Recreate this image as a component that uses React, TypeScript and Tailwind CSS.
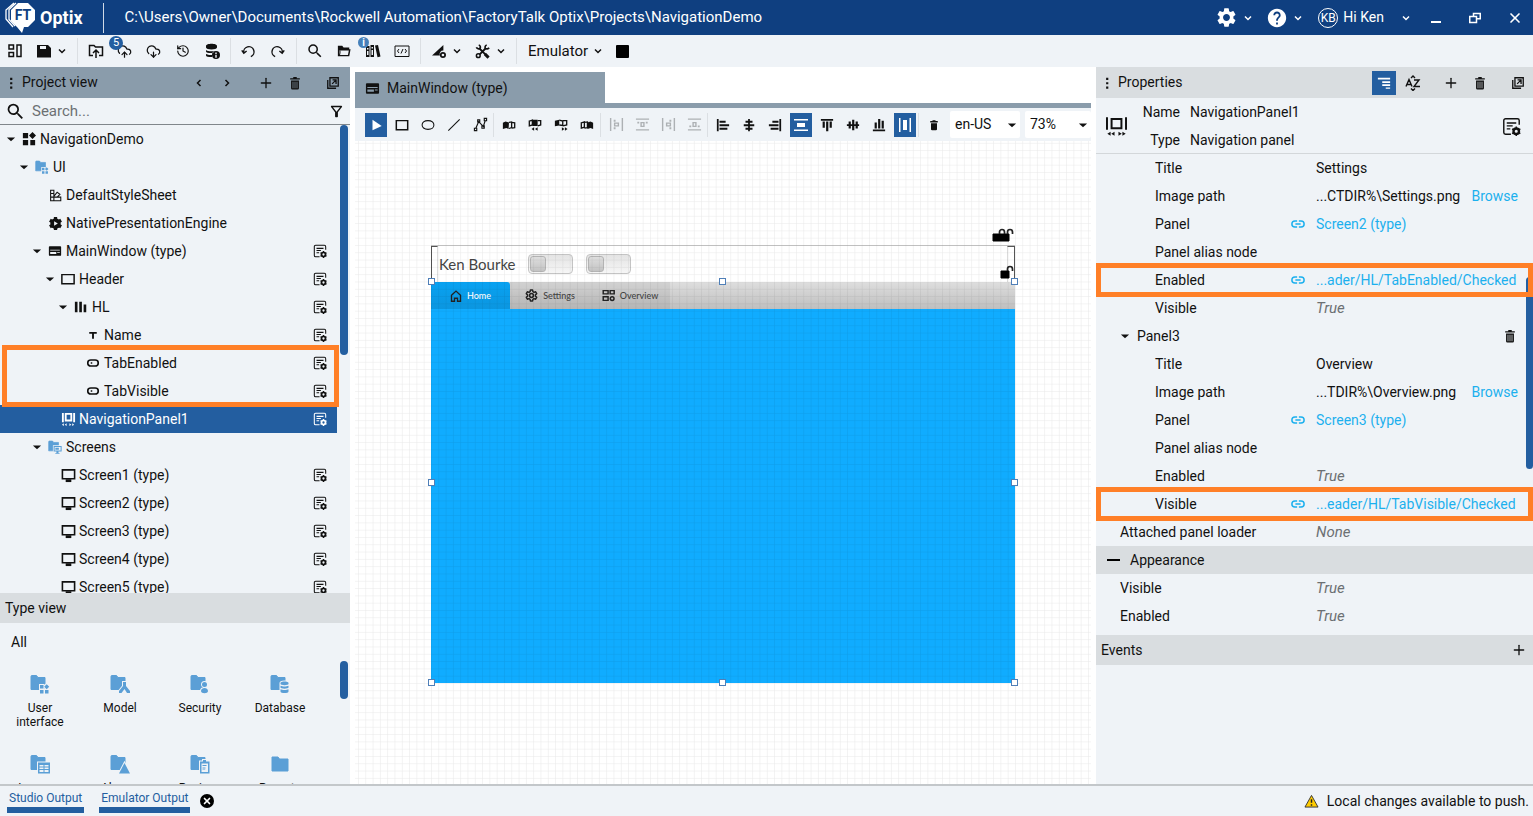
import type { ReactNode } from "react";
import clsx from "clsx";
import { CloudDownload, CloudUpload, History, Plus, X } from "lucide-react";
import { MdHelp, MdOutlineFilterAlt, MdSearch, MdSettings } from "react-icons/md";

interface GlyphProps {
    d?: string;
    line?: string;
    size?: number;
    width?: number;
    className?: string;
}

// d is filled, line is stroked, both on a 16 unit grid
function Glyph({ d, line, size = 16, width = 1.5, className }: GlyphProps) {
    return (
        <svg width={size} height={size} viewBox="0 0 16 16" className={clsx("shrink-0", className)} aria-hidden="true">
            {d && <path d={d} fill="currentColor" fillRule="evenodd" />}
            {line && <path d={line} fill="none" stroke="currentColor" strokeWidth={width} />}
        </svg>
    );
}

const TRASH = "M6 1.5h4v1h3v2H3v-2h3zM4 5.5h8v8a1.5 1.5 0 0 1-1.5 1.500h-5A1.5 1.5 0 0 1 4 13.500z";
const NAV_PANEL = "M1 1h2v10H1zM13 1h2v10h-2zM4 1h8v9H4zM6 3v5h4V3zM1 13.500l2-1.500v3zM4 13.500l2-1.500v3zM12 12l2 1.500-2 1.500zM9 12l2 1.500L9 15z";
const WINDOW = "M2 2.500h12a1 1 0 0 1 1 1v9a1 1 0 0 1-1 1H2a1 1 0 0 1-1-1v-9a1 1 0 0 1 1-1zM2.500 6.500v1h11v-1zM2.500 9v2.500h7V9zM10.500 9v1h3V9z";
const ARROW = "M2.500 6h11L8 11z";
const MONITOR = "M1.500 2h13v9.500h-13z";

function Chevron({ className }: { className?: string }) {
    return <Glyph size={8} line="M2 5l6 6 6-6" width={3} className={className} />;
}

function TrashIcon() {
    return (
        <Glyph
            size={14}
            d="M6 1h4v1.500h3.500v1.500h-11V2.500H6zM3.500 5h9v9a1.500 1.500 0 0 1-1.500 1.500H5A1.500 1.500 0 0 1 3.500 14zM5.300 6.500v7.500h.8V6.500zM7.600 6.500v7.500h.8V6.500zM9.900 6.500v7.500h.8V6.500z"
        />
    );
}

function PopOutIcon() {
    return <Glyph size={14} line="M4.500 2h9.500v9.500H4.500zM2 4.500V14h9.500M7 9l4-4M7.500 4.500h4V9" />;
}

function DotsIcon() {
    return <Glyph size={14} d="M7 2h2.500v2.500H7zM7 7h2.500v2.500H7zM7 12h2.500v2.500H7z" />;
}

function EditIcon({ size = 14 }: { size?: number }) {
    return (
        <svg width={size} height={size} viewBox="0 0 16 16" className="shrink-0" aria-hidden="true">
            <path d="M7.500 14.500H3a1.500 1.500 0 0 1-1.500-1.500V3A1.500 1.500 0 0 1 3 1.500h10A1.500 1.500 0 0 1 14.500 3v3.500M4 5h8M4 7.500h5M4 10h3" fill="none" stroke="currentColor" strokeWidth="1.200" />
            <circle cx="12" cy="12" r="2.300" fill="none" stroke="currentColor" strokeWidth="2" />
            <path d="M12 8v8M8.500 10l7 4M8.500 14l7-4" stroke="currentColor" strokeWidth="1.200" strokeDasharray="1.500 5" />
        </svg>
    );
}

function LinkIcon() {
    return <Glyph size={14} line="M7 4.500H4.500a3.500 3.500 0 0 0 0 7H7M9 4.500h2.500a3.500 3.500 0 0 1 0 7H9M5 8h6" width={1.700} className="text-[#1cb0ee]" />;
}

/* ---------- title bar ---------- */

function Logo() {
    return (
        <div className="flex items-center gap-1">
            <svg width="31" height="32" viewBox="0 0 31 32" aria-label="FT">
                <path d="M13 1h10l7 7v10l-7 7h-4l-2 6-5-6-6-6V8z" fill="#fff" />
                <path d="M9 1L1 8v9l7 8M11 1L4 7.500v10L10 24" fill="none" stroke="#fff" strokeWidth="1.300" />
                <text x="18" y="18" textAnchor="middle" fontSize="14" fontWeight="700" fill="#0f3f80">FT</text>
            </svg>
            <span className="text-[18px] font-bold">Optix</span>
        </div>
    );
}

function TitleBar() {
    return (
        <header className="flex h-[35px] shrink-0 items-center bg-[#0f3f80] pl-[5px] text-white">
            <Logo />
            <div className="ml-5 h-[30px] w-px bg-white/80" />
            <h1 className="ml-[21px] text-[15px]">
                C:\Users\Owner\Documents\Rockwell Automation\FactoryTalk Optix\Projects\NavigationDemo
            </h1>
            <div className="ml-auto flex items-center">
                <button aria-label="Settings" className="flex items-center gap-1.5">
                    <MdSettings size={23} />
                    <Chevron />
                </button>
                <button aria-label="Help" className="ml-3.5 flex items-center gap-1.5">
                    <MdHelp size={22} />
                    <Chevron />
                </button>
                <button className="ml-4 flex items-center">
                    <span className="mr-[5px] flex size-5 items-center justify-center rounded-full border border-white text-[12px]">KB</span>
                    Hi Ken
                    <Chevron className="ml-[18px]" />
                </button>
                <button aria-label="Minimize" className="ml-[21px] flex h-5 w-3 items-end pb-[5px]">
                    <span className="h-0.5 w-[10px] bg-white" />
                </button>
                <button aria-label="Restore" className="ml-[26px]">
                    <Glyph size={12} line="M6 6V2h9v7h-4M1 6h9v8H1z" width={2} />
                </button>
                <button aria-label="Close" className="mr-2.5 ml-[26px]">
                    <X size={16} strokeWidth={2.5} />
                </button>
            </div>
        </header>
    );
}

/* ---------- main toolbar ---------- */

function ToolButton({ label, badge, children }: { label: string; badge?: string; children: ReactNode }) {
    return (
        <button aria-label={label} className="relative flex h-7 w-[29px] shrink-0 items-center justify-center">
            {children}
            {badge && (
                <span className={clsx(
                    "absolute flex items-center justify-center rounded-full text-white",
                    badge === "i" ? "top-0 left-0 size-[11px] bg-[#4580ba] text-[10px] font-bold" : "-top-px -left-px size-[14px] bg-[#235ea0] text-[11px]"
                )}>
                    {badge}
                </span>
            )}
        </button>
    );
}

function MenuButton({ label, children }: { label: string; children: ReactNode }) {
    return (
        <button aria-label={label} className="flex h-7 shrink-0 items-center pr-[7px]">
            <span className="flex w-[29px] justify-center">{children}</span>
            <Chevron />
        </button>
    );
}

function Separator() {
    return <div className="mr-[3px] ml-1 h-[26px] w-px shrink-0 bg-[#dbdfe3]" />;
}

function Toolbar() {
    return (
        <div className="flex h-8 shrink-0 items-center bg-[#eff3f7]">
            <ToolButton label="Dashboard"><Glyph line="M2 2h4.500v4H2zM2 9.500h4.500v4H2zM10 2h4v11.500h-4z" /></ToolButton>
            <MenuButton label="Save">
                <Glyph d="M1 2h11l3 3v9.500H1zM4 3v3h6V3z" />
            </MenuButton>
            <Separator />
            <ToolButton label="Open folder"><Glyph line="M5 12.500H1.500v-10H6L7.500 4h7v8.500H11M8 15V7.500M5 10l3-3 3 3" /></ToolButton>
            <ToolButton label="Push" badge="5"><CloudUpload size={15} /></ToolButton>
            <ToolButton label="Pull"><CloudDownload size={15} /></ToolButton>
            <ToolButton label="History"><History size={14} /></ToolButton>
            <ToolButton label="Database information">
                <Glyph d="M2 3c0-3 11-3 11 0v1.500c0 2.500-11 2.500-11 0zM2 7c2 1.500 5 1.500 8 1.200L9 10c-3 .3-7 0-7-1.500zM2 11c2 1 4 1 6 1v2c-4 0-6-.5-6-1.500zM12 8a4 4 0 1 1 0 8 4 4 0 0 1 0-8zM11.300 9.500V11h1.400V9.500zM11.300 11.800v3h1.400v-3z" />
            </ToolButton>
            <Separator />
            <ToolButton label="Undo"><Glyph size={15} line="M3 9.500A5.500 5.500 0 1 1 10.500 13.500M.8 6.800L3 9.800l3-2.300" /></ToolButton>
            <ToolButton label="Redo"><Glyph size={15} line="M13 9.500A5.500 5.500 0 1 0 5.500 13.500M15.200 6.800L13 9.800l-3-2.300" /></ToolButton>
            <Separator />
            <ToolButton label="Search"><MdSearch size={18} /></ToolButton>
            <ToolButton label="Open"><Glyph size={14} d="M1 2h5l1.500 2H14v2h1.500L14 14H1zM3 7v5.500l1-5.500zM4.500 7.500l-1 5h9l1-5z" /></ToolButton>
            <ToolButton label="Libraries" badge="i">
                <Glyph d="M1 3h3.500v11H1zM5.500 2H9v12H5.500zM10 2.500l3-.5 2.500 11.500-3 .8zM2 5v1.500h1.500V5zM2 8v4h1.500V8zM6.500 4v1.500H8V4zM6.500 7v5H8V7z" />
            </ToolButton>
            <ToolButton label="Code"><Glyph line="M1 3h14v10.500H1zM5 6L3.500 8 5 10M11 6l1.500 2-1.500 2M9 6l-2 4.500" width={1} /></ToolButton>
            <Separator />
            <MenuButton label="Measure"><Glyph size={14} d="M0 13L13 1v6.500a4 4 0 0 0-4 5.500zM12.500 9a3.500 3.500 0 1 1 0 7 3.500 3.500 0 0 1 0-7zM12.500 11a1.500 1.500 0 1 0 0 3 1.500 1.500 0 0 0 0-3z" /></MenuButton>
            <MenuButton label="Tools">
                <svg width="15" height="15" viewBox="0 0 16 16" fill="none" stroke="currentColor" aria-hidden="true">
                    <path d="M4.500 4.500L11 11M11.500 4.500L5 11" strokeWidth="2" />
                    <path d="M1.500 3.500a2.500 2.500 0 0 0 4 1 2.500 2.500 0 0 0-1.500-3.500M12.500 1a2.500 2.500 0 0 0-1.500 3.500 2.500 2.500 0 0 0 4-.5" strokeWidth="1.800" />
                    <circle cx="3.500" cy="12.500" r="2" strokeWidth="1.600" />
                    <path d="M10.500 10.500l4 4" strokeWidth="3.200" />
                </svg>
            </MenuButton>
            <Separator />
            <button className="ml-2 flex items-center gap-1.5 text-[15px]">
                Emulator
                <Chevron />
            </button>
            <ToolButton label="Stop"><span className="ml-3 size-[13px] shrink-0 rounded-[1px] bg-black" /></ToolButton>
        </div>
    );
}

/* ---------- project tree ---------- */

interface TreeItem {
    name: string;
    level: number;
    icon: ReactNode;
    open?: boolean;
    editable?: boolean;
    selected?: boolean;
    highlight?: boolean;
}

const indents = ["pl-[5px]", "pl-[18px]", "pl-[31px]", "pl-[44px]", "pl-[57px]", "pl-[69px]"];

const screenIcon = <Glyph size={15} line={MONITOR} d="M5 12h6v3H5z" width={1.700} />;
const toggleIcon = <Glyph size={12} line="M5 4h6a4 4 0 0 1 0 8H5a4 4 0 0 1 0-8zM5 8h2" width={2.2} />;

const tree: TreeItem[] = [
    { name: "NavigationDemo", level: 0, open: true, icon: <Glyph size={14} d="M1 1h6v6H1zM12 0l4 4-4 4-4-4zM1 9h6v6H1zM9.500 9H15v6H9.500z" /> },
    { name: "UI", level: 1, open: true, icon: <FolderIcon kind="grid" size={14} /> },
    { name: "DefaultStyleSheet", level: 2, icon: <Glyph size={13} line="M2 1.500h4v13H2zM2 5.500h4M2 10h12.500v4.500H2M6 9l4-5 3.500 2.500L10 10" width={1.300} /> },
    { name: "NativePresentationEngine", level: 2, icon: <EngineIcon /> },
    { name: "MainWindow (type)", level: 2, open: true, editable: true, icon: <Glyph size={14} d={WINDOW} /> },
    { name: "Header", level: 3, open: true, editable: true, icon: <Glyph size={14} line="M1 3h14v10.500H1z" width={1.700} /> },
    { name: "HL", level: 4, open: true, editable: true, icon: <Glyph size={14} d="M1 2h3v12H1zM6 2h3v12H6zM11 5h3v9h-3z" /> },
    { name: "Name", level: 5, editable: true, icon: <Glyph size={10} d="M2 3h12v3H9.500v8h-3V6H2z" /> },
    { name: "TabEnabled", level: 5, editable: true, highlight: true, icon: toggleIcon },
    { name: "TabVisible", level: 5, editable: true, icon: toggleIcon },
    { name: "NavigationPanel1", level: 3, editable: true, selected: true, icon: <Glyph size={15} d={NAV_PANEL} /> },
    { name: "Screens", level: 2, open: true, icon: <FolderIcon kind="screen" size={14} /> },
    { name: "Screen1 (type)", level: 3, editable: true, icon: screenIcon },
    { name: "Screen2 (type)", level: 3, editable: true, icon: screenIcon },
    { name: "Screen3 (type)", level: 3, editable: true, icon: screenIcon },
    { name: "Screen4 (type)", level: 3, editable: true, icon: screenIcon },
    { name: "Screen5 (type)", level: 3, editable: true, icon: screenIcon },
];

function EngineIcon() {
    return (
        <svg width="15" height="15" viewBox="0 0 16 16" aria-hidden="true">
            <circle cx="8" cy="8" r="5.500" fill="currentColor" />
            <path d="M8 1v14M2 4.500l12 7M2 11.500l12-7" stroke="currentColor" strokeWidth="3.500" />
            <path d="M6.500 5.500v5l4-2.500z" fill="#eff3f7" />
        </svg>
    );
}

type FolderKind = "grid" | "model" | "person" | "database" | "table" | "alarm" | "recipe" | "screen" | "plain";

const folderMarks: Record<FolderKind, string> = {
    grid: "M10 11h3.500v3.500H10zM16.700 10.200l2.500 2.500-2.500 2.500-2.500-2.500zM10 16h3.500v3.500H10zM15 16h3.500v3.500H15z",
    model: "M13 8h3v4l4 5v2h-3l-2.500-4-3 4H9v-2l4-5z",
    person: "M14.500 8a2.500 2.500 0 1 1 0 5 2.500 2.500 0 0 1 0-5zM11 17c0-4 7-4 7 0 0 3-7 3-7 0z",
    database: "M10.500 9c0-2 8-2 8 0v1c0 1.500-8 1.500-8 0zM10.500 11.800c2 1 6 1 8 0v1.700c0 1.500-8 1.500-8 0zM10.500 15.200c2 1 6 1 8 0v2.300c0 2-8 2-8 0z",
    table: "M8 8.500h12v11H8zM9.500 11v1.500h4V11zM14.500 11v1.500h4V11zM9.500 13.500V15h4v-1.500zM14.500 13.500V15h4v-1.500zM9.500 16v2h4v-2zM14.500 16v2h4v-2z",
    alarm: "M14.500 9l5.500 10.500H9z",
    recipe: "M10 7.500h3V6h3v1.500h3.500v12H10zM11.500 9.500V18H18V9.500zM12.500 11h4v1h-4zM12.500 13.500h3v1h-3z",
    screen: "M8 8.500h11.500v8H15v2h1.500v1h-6v-1H12v-2H8zM9.500 10v5H18v-5z",
    plain: "",
};

function FolderIcon({ kind, size = 20 }: { kind: FolderKind; size?: number }) {
    return (
        <svg width={size} height={size} viewBox="0 0 20 20" className="shrink-0 text-[#5b9fd6]" aria-hidden="true">
            <path d={kind === "plain" ? "M2 3h6l1.500 2H18v12H2z" : "M1 2.500A1 1 0 0 1 2 1.500h4.500l1.500 2h7v12H1z"} fill="currentColor" stroke="currentColor" strokeLinejoin="round" />
            <path d={folderMarks[kind]} fill="currentColor" fillRule="evenodd" stroke="#eff3f7" strokeWidth="2" paintOrder="stroke" />
        </svg>
    );
}

function TreeRow({ item }: { item: TreeItem }) {
    return (
        <li className={clsx(
            "relative flex h-7 shrink-0 items-center pr-2.5",
            indents[item.level],
            item.selected && "bg-[#235ea0] text-white"
        )}>
            <span className="w-3">{item.open && <Glyph size={12} d={ARROW} />}</span>
            <span className="mr-[3px] ml-1 flex w-4 justify-center">{item.icon}</span>
            <span className="grow">{item.name}</span>
            {item.editable && <button aria-label={`Edit ${item.name}`}><EditIcon /></button>}
            {item.highlight && (
                <span className="pointer-events-none absolute -top-[4px] -right-[2px] left-[2px] z-10 h-[62px] border-5 border-[#ff7f27]" />
            )}
        </li>
    );
}

function ProjectView() {
    return (
        <section className="flex h-[526px] shrink-0 flex-col">
            <div className="flex h-[31px] shrink-0 items-center bg-[#8a9cab] pr-2.5 pl-1">
                <DotsIcon />
                <h2 className="ml-1">Project view</h2>
                <div className="ml-auto flex items-center">
                    <button aria-label="Back" className="mr-5"><Glyph size={8} line="M11 2L5 8l6 6" width={3} /></button>
                    <button aria-label="Forward" className="mr-[27px]"><Glyph size={8} line="M5 2l6 6-6 6" width={3} /></button>
                    <button aria-label="Add" className="mr-[14px]"><Plus size={16} strokeWidth={2} /></button>
                    <button aria-label="Delete" className="mr-6"><TrashIcon /></button>
                    <button aria-label="Detach"><PopOutIcon /></button>
                </div>
            </div>
            <div className="flex h-[27px] shrink-0 items-center border-b border-[#80868b] pr-[5px] pl-[5px]">
                <MdSearch size={21} />
                <input aria-label="Search" placeholder="Search..." className="ml-1.5 grow bg-transparent text-[15px] outline-none placeholder:text-[#6c7073]" />
                <button aria-label="Filter"><MdOutlineFilterAlt size={17} /></button>
            </div>
            <div className="flex grow overflow-hidden">
                <ul className="flex grow flex-col">
                    {tree.map((item) => <TreeRow key={item.name} item={item} />)}
                </ul>
                <div className="mr-[2px] ml-[3px] h-[230px] w-2 rounded-full bg-[#235ea0]" />
            </div>
        </section>
    );
}

const types: { name: string; kind: FolderKind }[] = [
    { name: "User interface", kind: "grid" },
    { name: "Model", kind: "model" },
    { name: "Security", kind: "person" },
    { name: "Database", kind: "database" },
    { name: "Loggers", kind: "table" },
    { name: "Alarms", kind: "alarm" },
    { name: "Recipes", kind: "recipe" },
    { name: "Reports", kind: "plain" },
];

function TypeView() {
    return (
        <section className="flex min-h-0 grow flex-col">
            <h2 className="flex h-[30px] shrink-0 items-center bg-[#d9dde0] pl-[5px]">Type view</h2>
            <h3 className="flex h-[38px] shrink-0 items-center pl-[11px]">All</h3>
            <div className="flex min-h-0 grow overflow-hidden">
                <div className="grid w-80 auto-rows-[80px] grid-cols-4 pt-[13px]">
                    {types.map((type) => (
                        <button key={type.name} className="flex flex-col items-center gap-[7px] px-3 text-[12px] leading-[14px]">
                            <FolderIcon kind={type.kind} />
                            {type.name}
                        </button>
                    ))}
                </div>
                <div className="mr-[2px] ml-auto h-[38px] w-2 rounded-full bg-[#235ea0]" />
            </div>
        </section>
    );
}

/* ---------- editor ---------- */

interface Tool {
    label: string;
    icon: ReactNode;
    active?: boolean;
    disabled?: boolean;
}

const shapeTools: Tool[] = [
    { label: "Select", active: true, icon: <Glyph size={14} d="M4 2L14.500 9 4 14z" /> },
    { label: "Rectangle", icon: <Glyph size={14} line="M1.500 3h13v10.500h-13z" width={1.700} /> },
    { label: "Ellipse", icon: <Glyph size={14} line="M8 3c9 0 9 10 0 10S-1 3 8 3z" width={1.200} /> },
    { label: "Line", icon: <Glyph size={14} line="M1.500 14.500l13-13" width={1.200} /> },
    { label: "Polyline", icon: <Glyph size={15} line="M3 12l3-7 5 5 2-6M1.500 12H4v2.500H1.500zM5 3h2.200v2.200H5zM9.500 9.500h2.500V12H9.500zM12 1.500h2.500V4H12z" width={1.200} /> },
];

const orderTools: Tool[] = [
    { label: "Bring to front", icon: <Glyph size={14} d="M1 5.500L4 4l4 1-.5 7.500L5 11.500 1 12.500z" line="M8 5l3-.500V11l-3 1M11 5l3.500.500v5.500L11 11.500" /> },
    { label: "Bring forward", icon: <Glyph size={14} d="M5 2h6v7H5zM4 12.500l3-2v4zM8 12.500l3-2v4z" line="M1.500 3.500L5 2.500V8l-3.500 1zM11 3h3.500v5L11 9" /> },
    { label: "Send backward", icon: <Glyph size={14} d="M1 3l5-1v6.500l-5 1zM9 10.500l3 2-3 2zM12.500 10.500l3 2-3 2z" line="M6 2.500l4 1v5l-4-.500M10 3h4.500v5L10 9" /> },
    { label: "Send to back", icon: <Glyph size={14} d="M8.500 5L12 4l3 1.500v7l-3-1-3.500 1z" line="M1.500 5.500L5 4.500v6l-3.500 1zM5 5l3.500-.500V11L5 11.500" /> },
];

const distributeTools: Tool[] = [
    { label: "Distribute left", disabled: true, icon: <Glyph size={15} d="M1 1h1.500v14H1zM13.500 1H15v14h-1.500zM5 3h2v2H5zM5 11h2v2H5z" line="M6 6.500h4v3H6z" /> },
    { label: "Distribute top", disabled: true, icon: <Glyph size={15} d="M1 1.500h14V3H1zM1 13h14v1.500H1zM2.500 5h2v2h-2zM11.500 5h2v2h-2z" line="M6.500 6h3v4h-3z" /> },
    { label: "Distribute right", disabled: true, icon: <Glyph size={15} d="M1 1h1.500v14H1zM13.500 1H15v14h-1.500zM9 3h2v2H9zM9 11h2v2H9z" line="M6 6.500h4v3H6z" /> },
    { label: "Distribute bottom", disabled: true, icon: <Glyph size={15} d="M1 1.500h14V3H1zM1 13h14v1.500H1zM2.500 9h2v2h-2zM11.500 9h2v2h-2z" line="M6.500 6h3v4h-3z" /> },
];

const horizontalTools: Tool[] = [
    { label: "Align left", icon: <Glyph size={14} d="M1 1h2v14H1zM4 3h7v2.500H4zM4 7h11v2.500H4zM4 11h9v2.500H4z" /> },
    { label: "Align center", icon: <Glyph size={14} d="M7 1h2v2h3v2.500H9V7h5v2.500H9V11h3v2.500H9V15H7v-1.500H4V11h3V9.500H2V7h5V5.500H4V3h3z" /> },
    { label: "Align right", icon: <Glyph size={14} d="M13 1h2v14h-2zM5 3h7v2.500H5zM1 7h11v2.500H1zM3 11h9v2.500H3z" /> },
    { label: "Stretch horizontally", active: true, icon: <Glyph size={16} d="M1 2h14v1.500H1zM4 6h8v4H4zM1 12.500h14V14H1z" /> },
];

const verticalTools: Tool[] = [
    { label: "Align top", icon: <Glyph size={14} d="M1 1h14v2H1zM3 4h2.500v7H3zM7 4h2.500v11H7zM11 4h2.500v7H11z" /> },
    { label: "Align middle", icon: <Glyph size={14} d="M1 7v2h2v3h2.500V9H7v5h2.500V9H11v3h2.500V9H15V7h-1.500V4H11v3H9.500V2H7v5H5.500V4H3v3z" /> },
    { label: "Align bottom", icon: <Glyph size={14} d="M1 13h14v2H1zM3 5h2.500v7H3zM7 1h2.500v11H7zM11 3h2.500v9H11z" /> },
    { label: "Stretch vertically", active: true, icon: <Glyph size={16} d="M2 1h1.500v14H2zM6 3h4v10H6zM12.500 1H14v14h-1.500z" /> },
];

function ToolGroup({ tools }: { tools: Tool[] }) {
    return (
        <div className="flex shrink-0 gap-1">
            {tools.map((tool) => (
                <button
                    key={tool.label}
                    aria-label={tool.label}
                    disabled={tool.disabled}
                    className={clsx(
                        "flex h-6 w-[22px] items-center justify-center",
                        tool.active && "bg-[#235ea0] text-white",
                        tool.disabled && "text-[#adb1b4]"
                    )}
                >
                    {tool.icon}
                </button>
            ))}
        </div>
    );
}

function Divider() {
    return <div className="mr-[4px] ml-[2px] h-6 w-px shrink-0 bg-[#dbdfe3]" />;
}

function Picker({ label, value, className }: { label: string; value: string; className?: string }) {
    return (
        <div className={clsx("relative h-[27px] rounded-[2px] bg-white", className)}>
            <select aria-label={label} className="h-full w-full appearance-none pl-[5px] outline-none">
                <option>{value}</option>
            </select>
            <Glyph size={12} d={ARROW} className="pointer-events-none absolute top-2 right-0.5" />
        </div>
    );
}

function EditorToolbar() {
    return (
        <div className="flex h-[33px] shrink-0 items-center overflow-hidden bg-[#eff3f7] pl-2.5">
            <ToolGroup tools={shapeTools} />
            <Divider />
            <ToolGroup tools={orderTools} />
            <Divider />
            <ToolGroup tools={distributeTools} />
            <Divider />
            <ToolGroup tools={horizontalTools} />
            <div className="w-1 shrink-0" />
            <ToolGroup tools={verticalTools} />
            <Divider />
            <ToolGroup tools={[{ label: "Delete", icon: <Glyph size={12} d={TRASH} /> }]} />
            <Picker label="Language" value="en-US" className="ml-[5px] w-[70px] shrink-0" />
            <Picker label="Zoom" value="73%" className="ml-[5px] w-[65px] grow" />
        </div>
    );
}

function Switch({ label }: { label: string }) {
    return (
        <label className="relative flex h-5 w-[45px] rounded-[4px] border border-[#c4c4c4] bg-linear-to-b from-[#e4e4e4] to-[#f6f6f6] p-px">
            <input type="checkbox" aria-label={label} className="absolute inset-0 appearance-none" />
            <span className="h-4 w-[16px] rounded-[3px] border border-[#b4b4b4] bg-linear-to-b from-[#dedede] to-[#c4c4c4]" />
        </label>
    );
}

function Padlock({ pair }: { pair?: boolean }) {
    return (
        <svg width={pair ? 22 : 14} height="14" viewBox={pair ? "0 0 22 14" : "8 0 14 14"} aria-hidden="true">
            <path d={pair ? "M1 6h16v7H1z" : "M9 6h8v7H9z"} stroke="#000" strokeLinejoin="round" />
            {pair && <path d="M7.500 6V4a2.500 2.500 0 0 1 5 0v2" fill="none" stroke="#222" strokeWidth="1.700" />}
            <path d="M15.500 6V4a2.500 2.500 0 0 1 5 0v2" fill="none" stroke="#222" strokeWidth="1.700" />
        </svg>
    );
}

const handles = [
    "-top-1 -left-[3px]",
    "-top-1 left-[288px]",
    "-top-1 -right-[3px]",
    "top-[197px] -left-[3px]",
    "top-[197px] -right-[3px]",
    "-bottom-[3px] -left-[3px]",
    "-bottom-[3px] left-[288px]",
    "-bottom-[3px] -right-[3px]",
];

function NavTab({ label, active, icon }: { label: string; active?: boolean; icon: ReactNode }) {
    return (
        <button className={clsx(
            "flex items-center justify-center gap-[5px] text-[9px] font-medium",
            active ? "w-[79px] rounded-t-[3px] bg-linear-to-b from-[#08a2f2] to-[#0b96e0] text-white" : "w-20 bg-black/5 text-[#444]"
        )}>
            <span className="text-[#222]">{icon}</span>
            {label}
        </button>
    );
}

function Canvas() {
    return (
        <div className="relative grow overflow-hidden bg-white font-[Lato,sans-serif]">
            {/* design surface, 800x600 shown at 73% */}
            <div className="relative mx-auto mt-[104px] h-[438px] w-[584px]">
                <div className="relative flex h-[37px] items-center border-t border-[#c9c9c9] pl-2">
                    <span className="absolute top-0 left-0 h-full w-[7px] border-t border-r border-l border-t-[#555] border-r-[#ddd] border-l-[#555]" />
                    <span className="absolute top-0 right-0 h-full w-2 border-t border-r border-l border-t-[#555] border-r-[#555] border-l-[#ddd]" />
                    <span className="text-[15px] text-[#444]">Ken Bourke</span>
                    <div className="ml-3 flex gap-[13px]">
                        <Switch label="TabEnabled" />
                        <Switch label="TabVisible" />
                    </div>
                </div>
                <div className="relative flex h-[401px] flex-col bg-[#10acff]">
                    <div className="flex h-[27px] bg-linear-to-b from-[#dedede] to-[#bfbfbf]">
                        <NavTab label="Home" active icon={<Glyph size={12} line="M2 7l6-5.500L14 7v8h-4v-4H6v4H2z" width={1.800} />} />
                        <NavTab label="Settings" icon={<SmallGear />} />
                        <NavTab label="Overview" icon={<Glyph size={13} line="M1.500 2h6v4h-6zM10 2h5v4h-5zM1.500 9.500h6v4.500h-6zM12.500 9.500a2.300 2.300 0 1 1 0 4.600 2.300 2.300 0 0 1 0-4.600z" width={1.800} />} />
                    </div>
                </div>
                <div className="absolute -top-[17px] right-px"><Padlock pair /></div>
                <div className="absolute top-5 right-px"><Padlock /></div>
            </div>
            <svg className="pointer-events-none absolute inset-0 h-full w-full" aria-hidden="true">
                <defs>
                    <pattern id="grid" x="3" y="1.800" width="7.300" height="7.300" patternUnits="userSpaceOnUse">
                        <path d="M7.300 0H0V7.300" fill="none" stroke="#000" strokeOpacity="0.090" />
                    </pattern>
                </defs>
                <rect width="100%" height="100%" fill="url(#grid)" />
            </svg>
            <div className="pointer-events-none absolute top-[141px] left-1/2 h-[401px] w-[584px] -translate-x-1/2">
                {handles.map((place) => (
                    <span key={place} className={clsx("absolute size-[7px] border border-[#4f7fb8] bg-white", place)} />
                ))}
            </div>
        </div>
    );
}

function SmallGear() {
    return (
        <svg width="13" height="13" viewBox="0 0 24 24" fill="none" stroke="currentColor" strokeWidth="2.800" strokeLinejoin="round" aria-hidden="true">
            <circle cx="12" cy="12" r="3.500" />
            <path d="M10 2h4l.6 3 2 1.200 3-1 2 3.500-2.400 2v2.600l2.400 2-2 3.500-3-1-2 1.200-.6 3h-4l-.6-3-2-1.200-3 1-2-3.500 2.400-2v-2.600l-2.400-2 2-3.500 3 1 2-1.200z" />
        </svg>
    );
}

function Editor() {
    return (
        <main className="flex min-w-0 grow flex-col bg-white px-[5px] pt-[5px]">
            <div className="shrink-0 border-b-5 border-[#8a9cab]">
                <button className="flex h-[31px] w-[250px] items-center gap-[7px] bg-[#8a9cab] pt-px pl-2.5">
                    <Glyph size={15} d={WINDOW} />
                    MainWindow (type)
                </button>
            </div>
            <EditorToolbar />
            <Canvas />
        </main>
    );
}

/* ---------- properties ---------- */

interface Property {
    name: string;
    value?: string;
    linked?: boolean;
    browse?: boolean;
    muted?: boolean;
    highlight?: boolean;
}

const settingsPanel: Property[] = [
    { name: "Title", value: "Settings" },
    { name: "Image path", value: "...CTDIR%\\Settings.png", browse: true },
    { name: "Panel", value: "Screen2 (type)", linked: true },
    { name: "Panel alias node" },
    { name: "Enabled", value: "...ader/HL/TabEnabled/Checked", linked: true, highlight: true },
    { name: "Visible", value: "True", muted: true },
];

const overviewPanel: Property[] = [
    { name: "Title", value: "Overview" },
    { name: "Image path", value: "...TDIR%\\Overview.png", browse: true },
    { name: "Panel", value: "Screen3 (type)", linked: true },
    { name: "Panel alias node" },
    { name: "Enabled", value: "True", muted: true },
    { name: "Visible", value: "...eader/HL/TabVisible/Checked", linked: true, highlight: true },
];

function PropertyRow({ property, nested }: { property: Property; nested?: boolean }) {
    return (
        <div className={clsx("relative flex h-7 items-center", nested ? "pl-[59px]" : "pl-6")}>
            <span className={clsx("shrink-0", nested ? "w-[136px]" : "w-[171px]")}>{property.name}</span>
            <span className="w-[25px] shrink-0">{property.linked && <LinkIcon />}</span>
            {property.linked ? (
                <a href="#" className="whitespace-nowrap text-[#1cb0ee]">{property.value}</a>
            ) : (
                <span className={clsx("whitespace-nowrap", property.muted && "text-[15px] text-[#6c7073] italic")}>{property.value}</span>
            )}
            {property.browse && <button className="mr-[15px] ml-auto text-[#1cb0ee]">Browse</button>}
            {property.highlight && (
                <span className="pointer-events-none absolute inset-x-0 -top-[3px] -bottom-[3px] z-10 border-5 border-[#ff7f27]" />
            )}
        </div>
    );
}

function Properties() {
    return (
        <aside className="flex w-[437px] shrink-0 flex-col bg-[#eff3f7]">
            <div className="flex h-[31px] shrink-0 items-center bg-[#d9dde0] pr-2 pl-1">
                <DotsIcon />
                <h2 className="ml-1">Properties</h2>
                <div className="ml-auto flex items-center">
                    <button aria-label="Group" className="mr-[9px] flex size-6 items-center justify-center bg-[#235ea0] text-white">
                        <Glyph size={14} d="M1 2h14v2H1zM6 6h9v2H6zM6 9.500h9v2H6zM10 13h5v1.500h-5z" />
                    </button>
                    <button aria-label="Sort" className="mr-[22px]">
                        <Glyph size={16} line="M1 11.500L4 4.500l3 7M2 9.500h4M9 5h5l-5 6.500h6M6 3l2-2 2 2M6 13.500l2 2 2-2" width={1.400} />
                    </button>
                    <button aria-label="Add" className="mr-[14px]"><Plus size={16} strokeWidth={2} /></button>
                    <button aria-label="Delete" className="mr-6"><TrashIcon /></button>
                    <button aria-label="Detach"><PopOutIcon /></button>
                </div>
            </div>
            <div className="flex h-14 shrink-0 items-center border-b border-[#d3d7da] pt-px pr-3 pl-2.5">
                <Glyph size={21} d="M0 1h1.500v9.500H0zM14.500 1H16v9.500h-1.500zM3.500 1.500h9v8.500h-9zM5 3v5.500h6V3zM1 13.500L3.500 12v3zM4 13.500L6.500 12v3zM12.500 12l2.500 1.500-2.500 1.500zM9.500 12l2.500 1.500L9.500 15z" />
                <dl className="ml-[14px] grid grow auto-rows-[28px] grid-cols-[39px_1fr] items-center gap-x-2.5">
                    <dt className="text-right">Name</dt>
                    <dd>NavigationPanel1</dd>
                    <dt className="text-right">Type</dt>
                    <dd>Navigation panel</dd>
                </dl>
                <button aria-label="Edit"><EditIcon size={19} /></button>
            </div>
            <div className="relative">
                {settingsPanel.map((property) => <PropertyRow key={property.name} property={property} nested />)}
                <div className="flex h-7 items-center pr-4 pl-[23px]">
                    <Glyph size={12} d={ARROW} />
                    <span className="ml-1.5 grow">Panel3</span>
                    <button aria-label="Delete Panel3"><TrashIcon /></button>
                </div>
                {overviewPanel.map((property) => <PropertyRow key={property.name} property={property} nested />)}
                <PropertyRow property={{ name: "Attached panel loader", value: "None", muted: true }} />
                <div className="absolute top-[123px] right-0 h-[192px] w-[7px] rounded-full bg-[#235ea0]" />
            </div>
            <h3 className="flex h-7 items-center gap-2.5 bg-[#d9dde0] pl-[11px]">
                <span className="h-0.5 w-[13px] bg-black" />
                Appearance
            </h3>
            <PropertyRow property={{ name: "Visible", value: "True", muted: true }} />
            <PropertyRow property={{ name: "Enabled", value: "True", muted: true }} />
            <div className="mt-[5px] flex h-[30px] items-center justify-between bg-[#d9dde0] pr-1.5 pl-[5px]">
                <h3>Events</h3>
                <button aria-label="Add event"><Plus size={16} strokeWidth={2} /></button>
            </div>
        </aside>
    );
}

function StatusBar() {
    return (
        <footer className="flex h-8 shrink-0 items-center border-t-2 border-[#c3c7ca] bg-[#eff3f7] pr-1 pl-[7px]">
            <button className="h-6 border-b-6 border-[#235ea0] px-[2px] text-[12px] leading-[16px] text-[#235ea0]">Studio Output</button>
            <button className="ml-[15px] h-6 border-b-6 border-[#235ea0] px-[2px] text-[12px] leading-[16px] text-[#235ea0]">Emulator Output</button>
            <button aria-label="Close output" className="ml-2.5 flex size-[14px] items-center justify-center rounded-full bg-black text-white">
                <X size={10} strokeWidth={4} />
            </button>
            <p className="ml-auto flex items-center gap-2">
                <svg width="15" height="14" viewBox="0 0 16 15" aria-hidden="true">
                    <path d="M8 1.500L15 14H1z" fill="#ffcc00" stroke="#333" strokeLinejoin="round" />
                    <path d="M8 5.500v4M8 11v1.700" stroke="#222" strokeWidth="1.600" />
                </svg>
                Local changes available to push.
            </p>
        </footer>
    );
}

export default function App() {
    return (
        <div className="flex h-screen flex-col overflow-hidden bg-white font-[Roboto,sans-serif] text-[14px] text-[#111]">
            <TitleBar />
            <Toolbar />
            <div className="flex min-h-0 grow">
                <div className="flex w-[350px] shrink-0 flex-col bg-[#eff3f7]">
                    <ProjectView />
                    <TypeView />
                </div>
                <Editor />
                <Properties />
            </div>
            <StatusBar />
        </div>
    );
}
